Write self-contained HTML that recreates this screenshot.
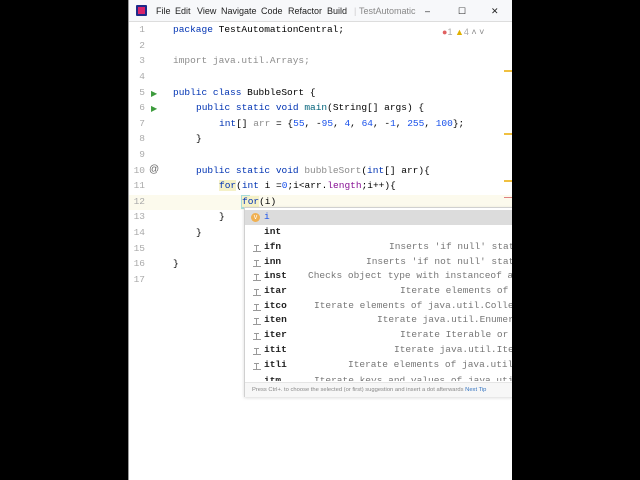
<!DOCTYPE html>
<html><head><meta charset="utf-8"><style>
*{margin:0;padding:0;box-sizing:border-box}
body{width:640px;height:480px;background:#000;position:relative;overflow:hidden;font-family:"Liberation Sans",sans-serif}
#win{position:absolute;left:128px;top:0;width:384px;height:480px;background:#fff;overflow:hidden;border-left:1px solid #999}
#title{position:absolute;left:0;top:0;width:384px;height:22px;background:#f7f8fa;border-bottom:1px solid #ddd;font-size:9px;color:#222}
#title span{position:absolute;top:6px}
.m{font-family:"Liberation Mono",monospace;font-size:9.5px;white-space:pre;position:absolute}
.ln{left:4px;width:12px;text-align:right;color:#aaa}
.k{color:#0033b3}.n{color:#1750eb}.g{color:#8c8c8c}.p{color:#871094}.mt{color:#00627a}
#popup{position:absolute;left:115px;top:207px;width:280px;height:190px;background:#fff;border:1px solid #d0d0d0;box-shadow:0 1px 3px rgba(0,0,0,.15)}
.row{position:absolute;left:0;width:280px;height:14.7px}
.ic{position:absolute;left:8px;width:8px;height:1px;background:#999}
.ic:before{content:"";position:absolute;left:3px;top:-6px;width:1px;height:6px;background:#999}
.ic:after{content:"";position:absolute;left:1px;top:-6px;width:5px;height:1px;background:#999}
.nm{left:19px;color:#222;font-weight:bold}
.ds{color:#777}
</style></head><body>
<div id="win">
<div id="title">
<div style="position:absolute;left:7px;top:5px;width:11px;height:11px;background:#1e2a8a;border-radius:1px"><div style="position:absolute;left:2px;top:2px;width:7px;height:7px;background:#d8246a"></div></div>
<span style="left:27px">File</span>
<span style="left:46px">Edit</span><span style="left:68px">View</span><span style="left:92px">Navigate</span><span style="left:132px">Code</span><span style="left:159px">Refactor</span><span style="left:198px">Build</span>
<span style="left:225px;color:#ccc">|</span><span style="left:230px;color:#888">TestAutomatic</span>
<span style="left:296px">–</span><span style="left:329px">☐</span><span style="left:362px">✕</span>
</div>
<div style="position:absolute;left:0;top:195px;width:384px;height:15px;background:#fcfaed"></div>
<div style="position:absolute;left:112px;top:195px;width:9px;height:14px;background:#a8dcd8"></div>
<div class="m ln" style="top:24px">1</div><div class="m" style="left:44px;top:24px"><span class="k">package</span> TestAutomationCentral;</div>
<div style="position:absolute;left:313px;top:27px;font-size:9px;color:#e06060">●<span style="color:#aaa">1</span> <span style="color:#e0b000">▲</span><span style="color:#aaa">4</span> <span style="color:#888">˄ ˅</span></div>
<div class="m ln" style="top:40px">2</div>
<div class="m ln" style="top:55px">3</div><div class="m g" style="left:44px;top:55px">import java.util.Arrays;</div>
<div class="m ln" style="top:71px">4</div>
<div class="m ln" style="top:87px">5</div><div style="position:absolute;left:22px;top:89px;color:#3c9b3c;font-size:8px">▶</div><div class="m" style="left:44px;top:87px"><span class="k">public class</span> BubbleSort {</div>
<div class="m ln" style="top:102px">6</div><div style="position:absolute;left:22px;top:104px;color:#3c9b3c;font-size:8px">▶</div><div class="m" style="left:67px;top:102px"><span class="k">public static void</span> <span class="mt">main</span>(String[] args) {</div>
<div class="m ln" style="top:118px">7</div><div class="m" style="left:90px;top:118px"><span class="k">int</span>[] <span class="g">arr</span> = {<span class="n">55</span>, -<span class="n">95</span>, <span class="n">4</span>, <span class="n">64</span>, -<span class="n">1</span>, <span class="n">255</span>, <span class="n">100</span>};</div>
<div class="m ln" style="top:133px">8</div><div class="m" style="left:67px;top:133px">}</div>
<div class="m ln" style="top:149px">9</div>
<div class="m ln" style="top:165px">10</div><div style="position:absolute;left:20px;top:164px;color:#666;font-size:10px">@</div><div class="m" style="left:67px;top:165px"><span class="k">public static void</span> <span class="g">bubbleSort</span>(<span class="k">int</span>[] arr){</div>
<div class="m ln" style="top:180px">11</div><div class="m" style="left:90px;top:180px"><span class="k" style="background:#f5f1c8">for</span>(<span class="k">int</span> i =<span class="n">0</span>;i&lt;arr.<span class="p">length</span>;i++){</div>
<div class="m ln" style="top:196px">12</div><div class="m" style="left:113px;top:196px"><span class="k" style="background:#f5f1c8">for</span>(i)</div>
<div class="m ln" style="top:211px">13</div><div class="m" style="left:90px;top:211px">}</div>
<div class="m ln" style="top:227px">14</div><div class="m" style="left:67px;top:227px">}</div>
<div class="m ln" style="top:243px">15</div>
<div class="m ln" style="top:258px">16</div><div class="m" style="left:44px;top:258px">}</div>
<div class="m ln" style="top:274px">17</div>
<div style="position:absolute;left:375px;top:70px;width:9px;height:2px;background:#f0c040"></div>
<div style="position:absolute;left:375px;top:133px;width:9px;height:2px;background:#f0c040"></div>
<div style="position:absolute;left:375px;top:180px;width:9px;height:2px;background:#f0c040"></div>
<div style="position:absolute;left:375px;top:197px;width:9px;height:1px;background:#e08080"></div>
<div id="popup">
<div class="row" style="top:2px;background:#dcdcdc"><div style="position:absolute;left:6px;top:3px;width:9px;height:9px;border-radius:50%;background:#f0b050;color:#fff;font-size:7px;text-align:center;line-height:9px">v</div><div class="m" style="left:19px;top:1px;color:#1750eb">i</div></div>
<div class="row" style="top:17px"><div class="m nm" style="top:1px">int</div></div>
<div class="row" style="top:32px"><div class="ic" style="top:11px"></div><div class="m nm" style="top:1px">ifn</div><div class="m ds" style="left:144px;top:1px">Inserts 'if null' stat</div></div>
<div class="row" style="top:47px"><div class="ic" style="top:11px"></div><div class="m nm" style="top:1px">inn</div><div class="m ds" style="left:121px;top:1px">Inserts 'if not null' stat</div></div>
<div class="row" style="top:61px"><div class="ic" style="top:11px"></div><div class="m nm" style="top:1px">inst</div><div class="m ds" style="left:63px;top:1px">Checks object type with instanceof a</div></div>
<div class="row" style="top:76px"><div class="ic" style="top:11px"></div><div class="m nm" style="top:1px">itar</div><div class="m ds" style="left:155px;top:1px">Iterate elements of</div></div>
<div class="row" style="top:91px"><div class="ic" style="top:11px"></div><div class="m nm" style="top:1px">itco</div><div class="m ds" style="left:69px;top:1px">Iterate elements of java.util.Colle</div></div>
<div class="row" style="top:105px"><div class="ic" style="top:11px"></div><div class="m nm" style="top:1px">iten</div><div class="m ds" style="left:132px;top:1px">Iterate java.util.Enumer</div></div>
<div class="row" style="top:120px"><div class="ic" style="top:11px"></div><div class="m nm" style="top:1px">iter</div><div class="m ds" style="left:155px;top:1px">Iterate Iterable or</div></div>
<div class="row" style="top:135px"><div class="ic" style="top:11px"></div><div class="m nm" style="top:1px">itit</div><div class="m ds" style="left:149px;top:1px">Iterate java.util.Ite</div></div>
<div class="row" style="top:150px"><div class="ic" style="top:11px"></div><div class="m nm" style="top:1px">itli</div><div class="m ds" style="left:103px;top:1px">Iterate elements of java.util</div></div>
<div class="row" style="top:166px;height:7px;overflow:hidden"><div class="m nm" style="top:1px">itm</div><div class="m ds" style="left:69px;top:1px">Iterate keys and values of java.uti</div></div>
<div style="position:absolute;left:0;top:174px;width:280px;height:15px;background:#f7f7f7;border-top:1px solid #e5e5e5;font-size:5.8px;color:#888;padding:4px 0 0 7px;white-space:nowrap">Press Ctrl+. to choose the selected (or first) suggestion and insert a dot afterwards <span style="color:#3574c0">Next Tip</span></div>
</div>
</div>
</body></html>
